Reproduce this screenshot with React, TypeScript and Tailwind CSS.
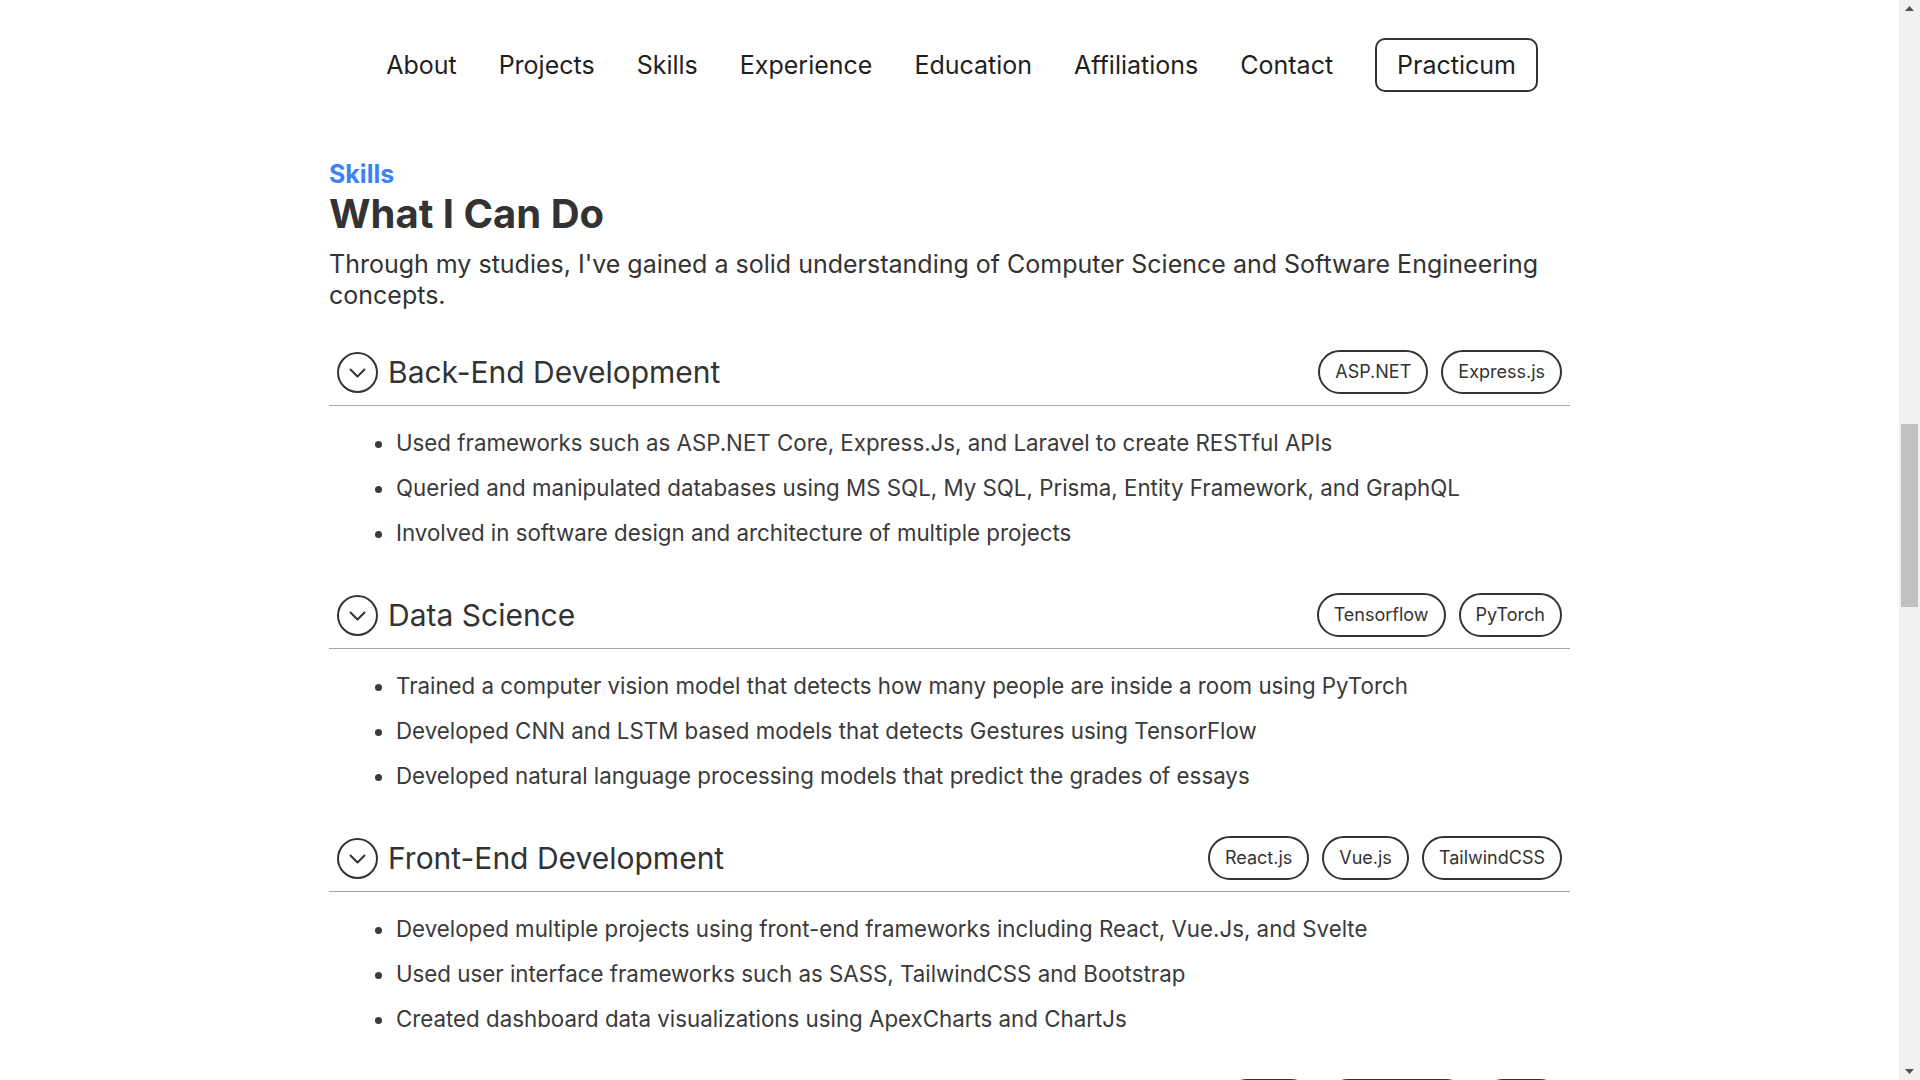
const navLinks = ["About", "Projects", "Skills", "Experience", "Education", "Affiliations", "Contact"];

const sections = [
  {
    title: "Back-End Development",
    tags: ["ASP.NET", "Express.js"],
    items: [
      "Used frameworks such as ASP.NET Core, Express.Js, and Laravel to create RESTful APIs",
      "Queried and manipulated databases using MS SQL, My SQL, Prisma, Entity Framework, and GraphQL",
      "Involved in software design and architecture of multiple projects",
    ],
  },
  {
    title: "Data Science",
    tags: ["Tensorflow", "PyTorch"],
    items: [
      "Trained a computer vision model that detects how many people are inside a room using PyTorch",
      "Developed CNN and LSTM based models that detects Gestures using TensorFlow",
      "Developed natural language processing models that predict the grades of essays",
    ],
  },
  {
    title: "Front-End Development",
    tags: ["React.js", "Vue.js", "TailwindCSS"],
    items: [
      "Developed multiple projects using front-end frameworks including React, Vue.Js, and Svelte",
      "Used user interface frameworks such as SASS, TailwindCSS and Bootstrap",
      "Created dashboard data visualizations using ApexCharts and ChartJs",
    ],
  },
  {
    title: "Mobile Development",
    tags: ["Flutter", "React Native", "Kotlin"],
    items: ["Built mobile applications"],
  },
];

function ChevronCircle() {
  return (
    <svg width="41" height="41" viewBox="0 0 41 41" fill="none" className="shrink-0">
      <circle cx="20.5" cy="20.5" r="19.5" stroke="#333" strokeWidth="2" />
      <path d="M13.5 17.5l7 7 7-7" stroke="#333" strokeWidth="2" strokeLinecap="round" strokeLinejoin="round" />
    </svg>
  );
}

function Section({ title, tags, items }: { title: string; tags: string[]; items: string[] }) {
  return (
    <div>
      <div className="flex items-center justify-between px-2 pb-[11px] border-b border-[#a8a8a8]">
        <div className="flex items-center gap-[10px]">
          <ChevronCircle />
          <h3 className="text-[30px] leading-9 text-[#333]">{title}</h3>
        </div>
        <div className="flex items-center gap-[13px]">
          {tags.map((t) => (
            <span
              key={t}
              className="rounded-full border-2 border-[#333] px-[15px] py-1.5 text-lg leading-7 text-[#333]"
            >
              {t}
            </span>
          ))}
        </div>
      </div>
      <ul className="mt-[23px] flex flex-col gap-[17px] list-disc pl-[67px] text-[22.3px] leading-7 text-[#3a3a3a]">
        {items.map((it) => (
          <li key={it}>{it}</li>
        ))}
      </ul>
    </div>
  );
}

function Scrollbar() {
  return (
    <div className="flex h-full w-[21px] shrink-0 flex-col bg-[#f1f1f1]">
      <div className="flex h-[17px] items-center justify-center">
        <svg width="9" height="5" viewBox="0 0 9 5">
          <path d="M0 5L4.5 0 9 5z" fill="#505050" />
        </svg>
      </div>
      <div className="flex-1">
        <div className="ml-[2px] mt-[407px] h-[183px] w-[17px] bg-[#c1c1c1]" />
      </div>
      <div className="flex h-[17px] items-center justify-center">
        <svg width="9" height="5" viewBox="0 0 9 5">
          <path d="M0 0L4.5 5 9 0z" fill="#505050" />
        </svg>
      </div>
    </div>
  );
}

export default function App() {
  return (
    <div className="flex h-screen w-full overflow-hidden bg-white [font-family:Inter,sans-serif]">
      <div className="flex-1 overflow-hidden">
        <div className="mx-auto w-[1241px]">
          <nav className="flex items-center justify-end gap-[42px] pr-8 pt-[38px] text-[25px] text-[#1f1f1f]">
            {navLinks.map((l) => (
              <a key={l} href="#" className="leading-8">
                {l}
              </a>
            ))}
            <a href="#" className="rounded-[10px] border-2 border-[#333] px-5 py-[9px] leading-8">
              Practicum
            </a>
          </nav>

          <section className="mt-[66px]">
            <p className="text-[25px] font-bold leading-8 text-[#3b82f6]">Skills</p>
            <h2 className="mt-1 text-[40px] font-bold leading-10 text-[#333]">What I Can Do</h2>
            <p className="mt-[15px] text-[25px] leading-[31px] text-[#333]">
              Through my studies, I've gained a solid understanding of Computer Science and Software Engineering
              concepts.
            </p>
            <div className="mt-[39px] flex flex-col gap-[46px]">
              {sections.map((s) => (
                <Section key={s.title} {...s} />
              ))}
            </div>
          </section>
        </div>
      </div>
      <Scrollbar />
    </div>
  );
}
